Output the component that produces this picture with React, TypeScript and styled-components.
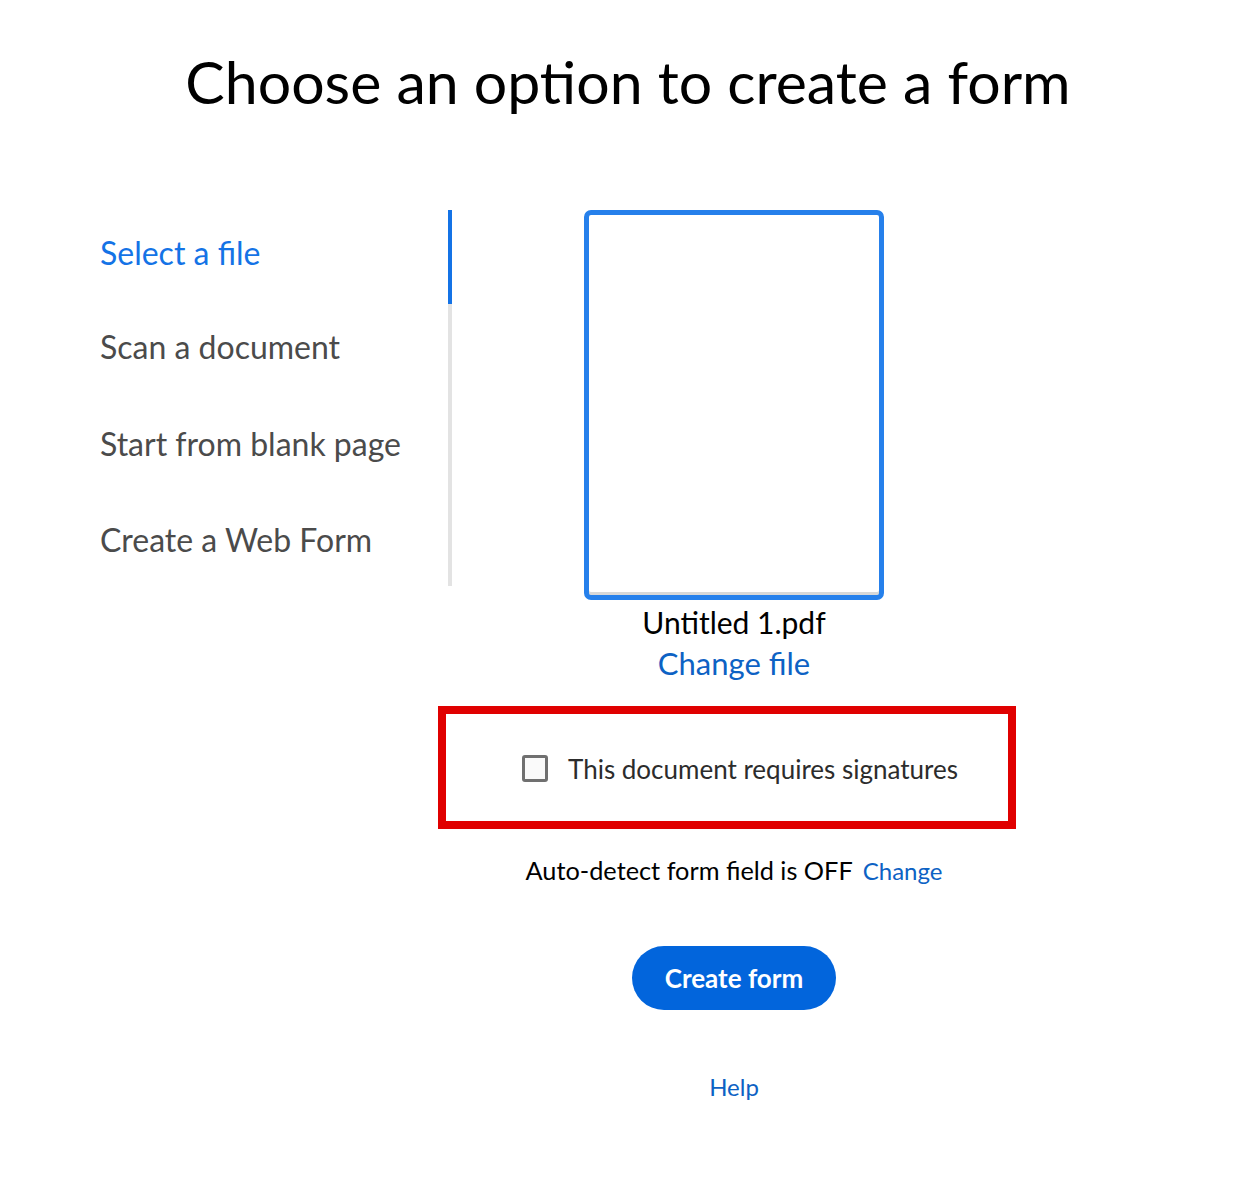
import React from 'react';
import styled, { createGlobalStyle } from 'styled-components';

const GlobalStyle = createGlobalStyle`
    body {
        margin: 0;
        background: #ffffff;
        font-family: 'Lato', 'Liberation Sans', sans-serif;
    }
`;

const Page = styled.div`
    width: 1256px;
    min-height: 1180px;
    display: flex;
    flex-direction: column;
`;

const Title = styled.h1`
    margin: 44px 0 0 0;
    font-size: 59px;
    font-weight: 400;
    line-height: 76px;
    text-align: center;
    color: #000000;
`;

const TopRow = styled.div`
    display: flex;
    padding-left: 100px;
    margin-top: 90px;
`;

const Nav = styled.ul`
    list-style: none;
    margin: 0;
    padding: 0;
    width: 352px;
`;

// text sits a little above the middle of each tab, as in the reference
const NavItem = styled.li<{ active?: boolean }>`
    box-sizing: border-box;
    height: 94px;
    padding-bottom: 10px;
    display: flex;
    align-items: center;
    font-size: 32px;
    color: ${p => (p.active ? '#1473e6' : '#4b4b4b')};
    border-right: 4px solid ${p => (p.active ? '#1473e6' : '#e3e3e3')};
    cursor: pointer;

    &:nth-child(n + 3) {
        padding-bottom: 4px;
    }
    &:last-child {
        padding-bottom: 0;
    }
`;

const PreviewColumn = styled.div`
    margin-left: 132px;
    width: 300px;
    display: flex;
    flex-direction: column;
    align-items: center;
`;

const Preview = styled.div`
    box-sizing: border-box;
    width: 300px;
    height: 390px;
    border: 5px solid #2680eb;
    border-radius: 7px;
    background: #ffffff;
    box-shadow: inset 0 -3px 0 #d8d8d8;
`;

const FileName = styled.div`
    margin-top: 2px;
    font-size: 30px;
    line-height: 40px;
    color: #000000;
`;

const Link = styled.a<{ size?: number }>`
    font-size: ${p => p.size || 30}px;
    color: #0d62c4;
    text-decoration: none;
    cursor: pointer;
`;

const FileLink = styled(Link)`
    font-size: 31px;
    margin-top: 2px;
`;

const BottomColumn = styled.div`
    padding-left: 212px;
    display: flex;
    flex-direction: column;
    align-items: center;
`;

const Highlight = styled.div`
    box-sizing: border-box;
    margin-top: 24px;
    margin-right: 14px;
    width: 578px;
    height: 123px;
    border: 8px solid #e00000;
    display: flex;
    align-items: center;
    justify-content: center;
    gap: 20px;
    padding: 2px 0 0 26px;
`;

const CheckBox = styled.span`
    box-sizing: border-box;
    width: 26px;
    height: 27px;
    border: 3px solid #707070;
    border-radius: 3px;
    background: #fafafa;
`;

const CheckLabel = styled.span`
    font-size: 26px;
    color: #2c2c2c;
`;

const AutoDetect = styled.div`
    margin-top: 26px;
    display: flex;
    align-items: baseline;
    gap: 10px;
    font-size: 25.3px;
    color: #000000;
`;

const CreateButton = styled.button`
    margin-top: 61px;
    width: 204px;
    height: 64px;
    border: none;
    border-radius: 32px;
    background: #0265dc;
    color: #ffffff;
    font-family: inherit;
    font-size: 26px;
    font-weight: 700;
    cursor: pointer;
`;

const HelpRow = styled.div`
    margin-top: 62px;
`;

const navItems = ['Select a file', 'Scan a document', 'Start from blank page', 'Create a Web Form'];

export default function App() {
    return (
        <Page>
            <GlobalStyle />
            <Title>Choose an option to create a form</Title>
            <TopRow>
                <Nav>
                    {navItems.map((item, i) => (
                        <NavItem key={item} active={i === 0}>{item}</NavItem>
                    ))}
                </Nav>
                <PreviewColumn>
                    <Preview />
                    <FileName>Untitled 1.pdf</FileName>
                    <FileLink>Change file</FileLink>
                </PreviewColumn>
            </TopRow>
            <BottomColumn>
                <Highlight>
                    <CheckBox />
                    <CheckLabel>This document requires signatures</CheckLabel>
                </Highlight>
                <AutoDetect>
                    <span>Auto-detect form field is OFF</span>
                    <Link size={24}>Change</Link>
                </AutoDetect>
                <CreateButton>Create form</CreateButton>
                <HelpRow>
                    <Link size={24}>Help</Link>
                </HelpRow>
            </BottomColumn>
        </Page>
    );
}
